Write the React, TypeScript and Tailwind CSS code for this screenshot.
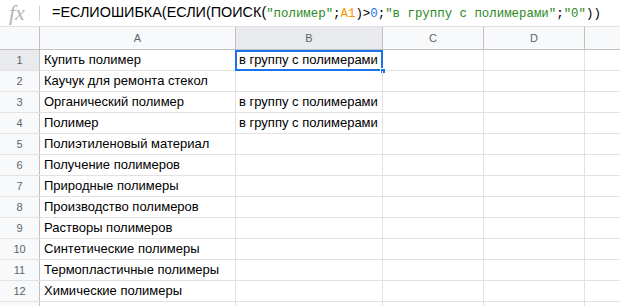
import React from "react";

const rowsA = [
  "Купить полимер",
  "Каучук для ремонта стекол",
  "Органический полимер",
  "Полимер",
  "Полиэтиленовый материал",
  "Получение полимеров",
  "Природные полимеры",
  "Производство полимеров",
  "Растворы полимеров",
  "Синтетические полимеры",
  "Термопластичные полимеры",
  "Химические полимеры",
  "",
];
const rowsB = [
  "в группу с полимерами",
  "",
  "в группу с полимерами",
  "в группу с полимерами",
  "",
  "",
  "",
  "",
  "",
  "",
  "",
  "",
  "",
];

const sans = { fontFamily: '"Liberation Sans", Arial, sans-serif' };
const mono = { fontFamily: '"Liberation Mono", "DejaVu Sans Mono", monospace' };

export default function App() {
  return (
    <div className="w-[620px] h-[306px] overflow-hidden bg-white" style={sans}>
      {/* formula bar */}
      <div className="flex h-[27px] items-center border-b border-[#e1e1e1]">
        <div className="w-[40px] shrink-0 h-full flex items-center relative">
          <span
            className="ml-[9px] text-[22px] italic text-[#b4b4b4] leading-none"
            style={{ fontFamily: '"Liberation Serif", "Times New Roman", serif' }}
          >
            fx
          </span>
          <div className="absolute right-0 top-[6px] h-[15px] w-px bg-[#d0d0d0]" />
        </div>
        <div className="pl-[12px] text-[14.4px] text-black whitespace-nowrap leading-none flex items-baseline">
          <span>=ЕСЛИОШИБКА(ЕСЛИ(ПОИСК(</span>
          <span style={mono} className="text-[12.4px] whitespace-pre">
            <span className="text-[#2b8a21]">"полимер"</span>
            <span>;</span>
            <span className="text-[#f29900]">A1</span>
            <span>)&gt;</span>
            <span className="text-[#1a73e8]">0</span>
            <span>;</span>
            <span className="text-[#2b8a21]">"в группу с полимерами"</span>
            <span>;</span>
            <span className="text-[#2b8a21]">"0"</span>
            <span>))</span>
          </span>
        </div>
      </div>
      {/* header row */}
      <div className="flex h-[23px] border-b border-[#c0c0c0] bg-[#f8f9fa] text-[11px] text-[#5f6368]">
        <div className="w-[40px] shrink-0 border-r border-[#c0c0c0]" />
        <div className="w-[196px] shrink-0 border-r border-[#c0c0c0] flex items-center justify-center">A</div>
        <div className="w-[147px] shrink-0 border-r border-[#c0c0c0] bg-[#e8eaed] flex items-center justify-center">B</div>
        <div className="w-[101px] shrink-0 border-r border-[#c0c0c0] flex items-center justify-center">C</div>
        <div className="w-[101px] shrink-0 border-r border-[#c0c0c0] flex items-center justify-center">D</div>
        <div className="flex-1" />
      </div>
      {rowsA.map((a, i) => (
        <div key={i} className="flex h-[21px] border-b border-[#e2e2e2] text-[13px] text-black">
          <div
            className={
              "w-[40px] shrink-0 border-r border-[#c0c0c0] flex items-center justify-center text-[11px] text-[#5f6368] " +
              (i === 0 ? "bg-[#e8eaed]" : "bg-[#f8f9fa]")
            }
          >
            {i < 12 ? i + 1 : ""}
          </div>
          <div className="w-[196px] shrink-0 border-r border-[#e2e2e2] flex items-center px-[4px] whitespace-nowrap overflow-hidden">
            {a}
          </div>
          <div className="w-[147px] shrink-0 border-r border-[#e2e2e2] flex items-center px-[3px] whitespace-nowrap relative">
            {rowsB[i]}
            {i === 0 && (
              <>
                <div className="absolute left-[-1px] top-[0px] right-[-1px] bottom-[-1px] border-2 border-[#1a73e8]" />
                <div className="absolute right-[-4px] bottom-[-4px] w-[6px] h-[6px] bg-[#1a73e8] border border-white" />
              </>
            )}
          </div>
          <div className="w-[101px] shrink-0 border-r border-[#e2e2e2]" />
          <div className="w-[101px] shrink-0 border-r border-[#e2e2e2]" />
          <div className="flex-1" />
        </div>
      ))}
    </div>
  );
}
